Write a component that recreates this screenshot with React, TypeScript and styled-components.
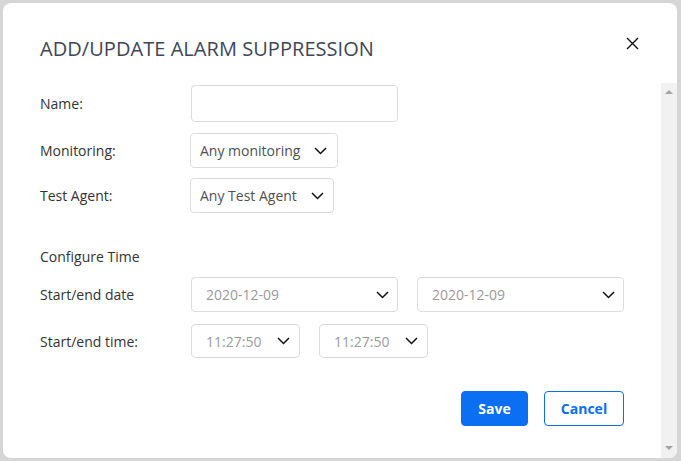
import React from "react";
import styled, { createGlobalStyle } from "styled-components";

const Global = createGlobalStyle`
  html, body { margin: 0; padding: 0; }
  body {
    background: #d6d6d6;
    font-family: "Open Sans", "Noto Sans", sans-serif;
    width: 681px;
    height: 461px;
    overflow: hidden;
  }
`;

const Dialog = styled.div`
  margin: 3px 4px 3px 3px;
  width: 674px;
  height: 455px;
  background: #fff;
  border-radius: 8px;
  display: flex;
  flex-direction: column;
  overflow: hidden;
`;

const Header = styled.div`
  height: 80px;
  box-sizing: border-box;
  padding: 32px 0 0 37px;
  display: flex;
  justify-content: space-between;
  align-items: flex-start;
`;

const Title = styled.h1`
  margin: 0;
  font-size: 20px;
  line-height: 28px;
  font-weight: 400;
  color: #3d4656;
  letter-spacing: 0.05px;
`;

const Close = styled.button`
  border: 0;
  background: none;
  padding: 0;
  margin: 2px 38px 0 0;
  width: 13px;
  height: 13px;
  display: flex;
  cursor: pointer;
`;

const Main = styled.div`
  flex: 1;
  display: flex;
  min-height: 0;
`;

const Content = styled.div`
  flex: 1;
  padding: 2px 37px 0 37px;
  display: flex;
  flex-direction: column;
`;

const Row = styled.div<{ $mt: number; $h: number }>`
  display: flex;
  align-items: center;
  margin-top: ${(p) => p.$mt}px;
  height: ${(p) => p.$h}px;
`;

const Label = styled.div`
  width: 150px;
  flex: none;
  font-size: 14px;
  color: #333;
`;

const Section = styled.div<{ $mt: number }>`
  margin-top: ${(p) => p.$mt}px;
  font-size: 14px;
  line-height: 20px;
  color: #333;
`;

const Controls = styled.div<{ $gap: number; $ml?: number }>`
  display: flex;
  gap: ${(p) => p.$gap}px;
  margin-left: ${(p) => p.$ml ?? 0}px;
  height: 100%;
`;

const Input = styled.input`
  box-sizing: border-box;
  width: 207px;
  height: 37px;
  margin-left: 1px;
  border: 1px solid #dcdcdc;
  border-radius: 4px;
  outline: none;
  font-family: inherit;
  font-size: 14px;
`;

const Select = styled.div<{ $w: number; $pl: number; $pr: number; $muted?: boolean }>`
  box-sizing: border-box;
  width: ${(p) => p.$w}px;
  height: 100%;
  border: 1px solid #dcdcdc;
  border-radius: 4px;
  display: flex;
  align-items: center;
  justify-content: space-between;
  padding: 0 ${(p) => p.$pr}px 0 ${(p) => p.$pl}px;
  font-size: 14px;
  color: ${(p) => (p.$muted ? "#9a9a9a" : "#505050")};
`;

const Chevron = () => (
  <svg width="13" height="8" viewBox="0 0 13 8">
    <polyline points="1,1 6.5,6.5 12,1" fill="none" stroke="#111" strokeWidth="1.5" />
  </svg>
);

const Buttons = styled.div`
  margin-top: 33px;
  display: flex;
  justify-content: flex-end;
  gap: 16px;
`;

const Button = styled.button<{ $primary?: boolean; $w: number }>`
  box-sizing: border-box;
  width: ${(p) => p.$w}px;
  height: 35px;
  border-radius: 4px;
  border: 1px solid #0a6ff2;
  background: ${(p) => (p.$primary ? "#0a6ff2" : "#fff")};
  color: ${(p) => (p.$primary ? "#fff" : "#0a6ff2")};
  font-family: inherit;
  font-weight: 700;
  font-size: 14px;
  padding: 0;
`;

const Scrollbar = styled.div`
  width: 16px;
  background: #f1f1f1;
  display: flex;
  flex-direction: column;
  justify-content: space-between;
  align-items: center;
  padding: 7px 0 8px;
  box-sizing: border-box;
`;

const Arrow = styled.div<{ $down?: boolean }>`
  width: 0;
  height: 0;
  border-left: 4px solid transparent;
  border-right: 4px solid transparent;
  ${(p) =>
    p.$down ? "border-top: 4px solid #a3a3a3;" : "border-bottom: 4px solid #a3a3a3;"}
`;

export default function App() {
  return (
    <>
      <Global />
      <Dialog>
        <Header>
          <Title>ADD/UPDATE ALARM SUPPRESSION</Title>
          <Close aria-label="Close">
            <svg width="13" height="13" viewBox="0 0 13 13">
              <path d="M1 1L12 12M12 1L1 12" stroke="#111" strokeWidth="1.4" />
            </svg>
          </Close>
        </Header>
        <Main>
          <Content>
            <Row $mt={0} $h={37}>
              <Label>Name:</Label>
              <Input />
            </Row>
            <Row $mt={11} $h={35}>
              <Label>Monitoring:</Label>
              <Select $w={148} $pl={9} $pr={10}>
                Any monitoring
                <Chevron />
              </Select>
            </Row>
            <Row $mt={10} $h={35}>
              <Label>Test Agent:</Label>
              <Select $w={144} $pl={9} $pr={9}>
                Any Test Agent
                <Chevron />
              </Select>
            </Row>
            <Section $mt={34}>Configure Time</Section>
            <Row $mt={10} $h={35}>
              <Label>Start/end date</Label>
              <Controls $gap={19} $ml={1}>
                <Select $w={207} $pl={14} $pr={8} $muted>
                  2020-12-09
                  <Chevron />
                </Select>
                <Select $w={207} $pl={14} $pr={8} $muted>
                  2020-12-09
                  <Chevron />
                </Select>
              </Controls>
            </Row>
            <Row $mt={12} $h={34}>
              <Label>Start/end time:</Label>
              <Controls $gap={19} $ml={1}>
                <Select $w={109} $pl={14} $pr={9} $muted>
                  11:27:50
                  <Chevron />
                </Select>
                <Select $w={109} $pl={14} $pr={9} $muted>
                  11:27:50
                  <Chevron />
                </Select>
              </Controls>
            </Row>
            <Buttons>
              <Button $primary $w={67}>Save</Button>
              <Button $w={80}>Cancel</Button>
            </Buttons>
          </Content>
          <Scrollbar>
            <Arrow />
            <Arrow $down />
          </Scrollbar>
        </Main>
      </Dialog>
    </>
  );
}
